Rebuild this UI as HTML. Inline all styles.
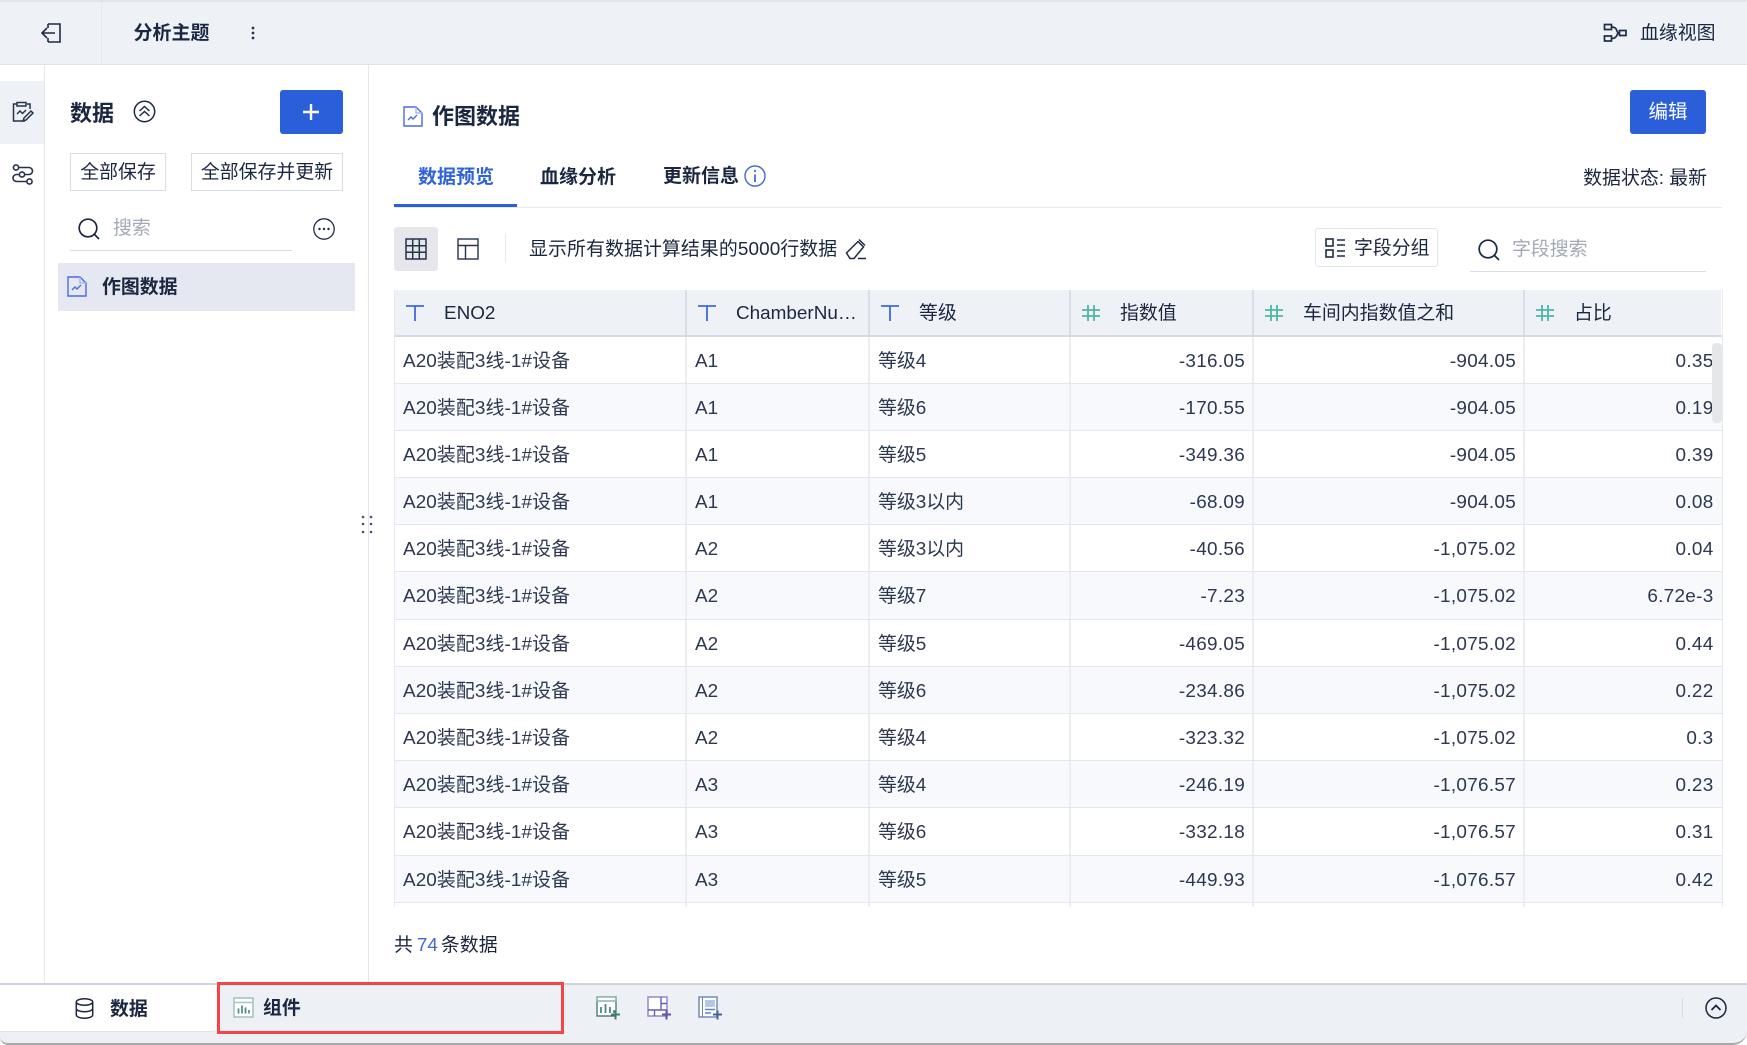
<!DOCTYPE html>
<html lang="zh"><head><meta charset="utf-8"><title>作图数据</title>
<style>
*{box-sizing:border-box}
html,body{margin:0;padding:0;background:#fff;width:1747px;height:1045px;overflow:hidden}
body{font-family:"Liberation Sans","Noto Sans CJK SC",sans-serif;color:#1b2740;font-size:18.9px;position:relative}
.a{position:absolute;white-space:nowrap;line-height:1}
.b{font-weight:700}
svg{position:absolute;overflow:visible}
.btn{position:absolute;border:1px solid #d8dce6;background:#fff;text-align:center;white-space:nowrap}
.tbl{position:absolute;left:394px;top:290px;width:1329px;height:617px;overflow:hidden;border-left:1px solid #e6e9f1;border-right:1px solid #e6e9f1}
.r{display:grid;grid-template-columns:292px 183px 201px 183px 271px 198px;height:47.2px;border-bottom:1px solid #e4e7ef;color:#2c3750}
.r.o{background:#f7f9fd}
.r>div{border-right:2px solid #eceef4;line-height:49px;padding:0 8px;white-space:nowrap;overflow:hidden}
.r>div:first-child{letter-spacing:.1px}
.r>div:last-child{border-right:0;padding-right:9px}
.r>.n{text-align:right;letter-spacing:.3px;padding-right:7px}
.r>div.n:last-child{padding-right:9.500px}
.h{height:46.500px;background:#eef1f6;border-bottom:2px solid #d6dae4;color:#1b2740;position:relative}
.r.h>div{border-right:2px solid #d9dde6;line-height:47px;padding-left:49px;letter-spacing:0}
.r.h>div:last-child{border-right:2px solid #fff}
</style></head><body>

<!-- header -->
<div style="position:absolute;left:0;top:0;width:1747px;height:65px;background:#eef1f6;border-top:2px solid #e2e5ea;border-bottom:1px solid #dfe3ec"></div>
<div style="position:absolute;left:101px;top:2px;width:1px;height:62px;background:#e2e6ee"></div>
<svg style="left:40px;top:22px" width="22" height="22" viewBox="0 0 22 22" fill="none" stroke="#1f2b45" stroke-width="1.6"><path d="M8 2h12v18H8M8 2v4M8 16v4M15 11H2M7 6l-5 5 5 5"/></svg>
<div class="a b" style="left:133.500px;top:24px;font-size:19px">分析主题</div>
<svg style="left:250px;top:26px" width="6" height="14" fill="#2a3550"><circle cx="3" cy="2" r="1.4"/><circle cx="3" cy="7" r="1.4"/><circle cx="3" cy="12" r="1.4"/></svg>
<svg style="left:1603px;top:22px" width="24" height="20" viewBox="0 0 24 20" fill="none" stroke="#1f2b45" stroke-width="1.700"><rect x="1.500" y="2.500" width="7" height="5"/><rect x="1.500" y="14" width="7" height="5"/><rect x="16.500" y="8.500" width="6.500" height="5"/><path d="M8.500 5c4 0 5 2 5.500 4 .3 1 1 2 2.500 2M8.500 16.500c4 0 5-2 5.500-3.500 .3-1 1-2 2.500-2"/></svg>
<div class="a" style="left:1640px;top:25px">血缘视图</div>

<!-- left rail -->
<div style="position:absolute;left:44px;top:65px;width:1px;height:918px;background:#e4e7ee"></div>
<div style="position:absolute;left:0;top:81px;width:44px;height:63px;background:#eef1f6"></div>
<svg style="left:12px;top:101px" width="22" height="22" viewBox="0 0 22 22" fill="none" stroke="#27334d" stroke-width="1.5"><path d="M5 3H1.500v17H13M15 3h3v5M5 1.500h9V5H5zM5 13l3-3 2.500 2.500L14 9M11 20l1-3 7-7 2 2-7 7z"/></svg>
<svg style="left:12px;top:164px" width="22" height="22" viewBox="0 0 22 22" fill="none" stroke="#27334d" stroke-width="1.6"><circle cx="4" cy="3.500" r="2.600"/><circle cx="10" cy="10.500" r="2.600"/><circle cx="17.500" cy="17.500" r="2.600"/><path d="M7 3.500h10a3.500 3.500 0 0 1 0 7h-4M7 10.500H4.500a3.500 3.500 0 0 0 0 7H15"/></svg>

<!-- panel -->
<div style="position:absolute;left:368px;top:65px;width:1px;height:918px;background:#e4e7ee"></div>
<div class="a b" style="left:70px;top:103px;font-size:22px">数据</div>
<svg style="left:133px;top:100px" width="23" height="23" viewBox="0 0 23 23" fill="none" stroke="#1f2b45" stroke-width="1.500"><circle cx="11.500" cy="11.500" r="10.200"/><path d="M6.500 11l5-4.500 5 4.500M6.500 16l5-4.500 5 4.500"/></svg>
<div style="position:absolute;left:280px;top:90px;width:63px;height:44px;background:#2b5fd9;border-radius:3px"></div>
<svg style="left:302px;top:103px" width="18" height="18" stroke="#fff" stroke-width="2.400"><path d="M1 9h16M9 1v16"/></svg>
<div class="btn" style="left:70px;top:153px;width:96px;height:38px;line-height:38px">全部保存</div>
<div class="btn" style="left:191px;top:153px;width:152px;height:38px;line-height:38px">全部保存并更新</div>
<svg style="left:78px;top:218px" width="22" height="22" viewBox="0 0 22 22" fill="none" stroke="#1b2740" stroke-width="1.700"><circle cx="10" cy="10" r="8.800"/><path d="M16.500 16.500l4.500 4.500"/></svg>
<div class="a" style="left:113px;top:220px;color:#a3a9b5">搜索</div>
<div style="position:absolute;left:70px;top:250px;width:222px;height:1px;background:#dadde5"></div>
<svg style="left:313px;top:218px" width="22" height="22" viewBox="0 0 22 22" fill="none" stroke="#1f2b45" stroke-width="1.300"><circle cx="11" cy="11" r="10.200"/><g fill="#1f2b45" stroke="none"><circle cx="6.500" cy="11" r="1.200"/><circle cx="11" cy="11" r="1.200"/><circle cx="15.500" cy="11" r="1.200"/></g></svg>
<div style="position:absolute;left:58px;top:263px;width:297px;height:48px;background:#e5e8f0"></div>
<svg style="left:67px;top:276px" width="20" height="21" viewBox="0 0 20 21" fill="none" stroke="#4a6ae0" stroke-width="1.400"><path d="M1 1h12l6 6v13H1z"/><path d="M13 1v6h6" stroke="#a9b8ef"/><path d="M5 14l3-3 2 2 4-4"/></svg>
<div class="a b" style="left:102px;top:279px">作图数据</div>
<svg style="left:360px;top:514px" width="14" height="21" fill="#4a5468"><circle cx="3" cy="3" r="1.300"/><circle cx="11" cy="3" r="1.300"/><circle cx="3" cy="10" r="1.300"/><circle cx="11" cy="10" r="1.300"/><circle cx="3" cy="18" r="1.300"/><circle cx="11" cy="18" r="1.300"/></svg>

<!-- main head -->
<svg style="left:403px;top:106px" width="20" height="21" viewBox="0 0 20 21" fill="none" stroke="#4a6ae0" stroke-width="1.400"><path d="M1 1h12l6 6v13H1z"/><path d="M13 1v6h6" stroke="#a9b8ef"/><path d="M5 14l3-3 2 2 4-4"/></svg>
<div class="a b" style="left:432px;top:106px;font-size:22px">作图数据</div>
<div style="position:absolute;left:1630px;top:90px;width:76px;height:44px;background:#2b5fd9;border-radius:3px;color:#fff;text-align:center;line-height:45px;font-size:19.500px">编辑</div>

<!-- tabs -->
<div class="a b" style="left:418px;top:167.500px;color:#2f62dc;font-size:19px">数据预览</div>
<div class="a b" style="left:540px;top:167.500px;font-size:19px">血缘分析</div>
<div class="a b" style="left:663px;top:166.500px;font-size:19px">更新信息</div>
<svg style="left:744px;top:165px" width="22" height="22" viewBox="0 0 22 22" fill="none" stroke="#3f68dc" stroke-width="1.400"><circle cx="11" cy="11" r="10"/><path d="M11 9.500V17" stroke-width="1.800"/><circle cx="11" cy="6" r="1.100" fill="#3f68dc" stroke="none"/></svg>
<div class="a" style="right:40px;top:169.500px">数据状态: 最新</div>
<div style="position:absolute;left:394px;top:207px;width:1328px;height:1px;background:#e6e9f0"></div>
<div style="position:absolute;left:394px;top:204px;width:123px;height:3px;background:#2b5fd9"></div>

<!-- toolbar -->
<div style="position:absolute;left:394px;top:227px;width:44px;height:44px;background:#e5e7eb;border-radius:3px"></div>
<svg style="left:405px;top:238px" width="22" height="22" viewBox="0 0 22 22" fill="none" stroke="#27334d" stroke-width="1.500"><rect x="1" y="1" width="20" height="20"/><path d="M7.700 1v20M14.300 1v20M1 7.700h20M1 14.300h20"/></svg>
<svg style="left:457px;top:238px" width="22" height="22" viewBox="0 0 22 22" fill="none" stroke="#27334d" stroke-width="1.400"><rect x="1" y="1" width="20" height="20"/><path d="M1 7.500h20M8.500 7.500V21"/></svg>
<div style="position:absolute;left:505px;top:233px;width:1px;height:30px;background:#e6e9f0"></div>
<div class="a" style="left:529px;top:240.500px;letter-spacing:.1px">显示所有数据计算结果的5000行数据</div>
<svg style="left:845px;top:238px" width="22" height="22" viewBox="0 0 22 22" fill="none" stroke="#1f2b45" stroke-width="1.500"><path d="M1.500 15L13 3.500 18.500 9 9 20.500H5z"/><path d="M14 1.500l6 6M13 20.500h8"/></svg>
<div style="position:absolute;left:1315px;top:228px;width:123px;height:39px;border:1px solid #e1e4eb;border-radius:3px"></div>
<svg style="left:1325px;top:238px" width="21" height="20" viewBox="0 0 21 20" fill="none" stroke="#1f2b45" stroke-width="1.600"><rect x="1" y="1" width="7" height="7"/><rect x="1" y="12" width="7" height="7"/><path d="M12 2h8M12 7h8M12 13h8M12 18h8"/></svg>
<div class="a" style="left:1354px;top:239.500px">字段分组</div>
<svg style="left:1478px;top:239px" width="22" height="22" viewBox="0 0 22 22" fill="none" stroke="#1b2740" stroke-width="1.700"><circle cx="10" cy="10" r="8.800"/><path d="M16.500 16.500l4.500 4.500"/></svg>
<div class="a" style="left:1512px;top:240.500px;color:#a3a9b5">字段搜索</div>
<div style="position:absolute;left:1470px;top:271px;width:236px;height:1px;background:#dadde5"></div>

<!-- table -->
<div class="tbl">
<div class="r h"><div>ENO2</div><div>ChamberNu…</div><div>等级</div><div>指数值</div><div>车间内指数值之和</div><div>占比</div></div>
<div class="r"><div>A20装配3线-1#设备</div><div>A1</div><div>等级4</div><div class="n">-316.05</div><div class="n">-904.05</div><div class="n">0.35</div></div>
<div class="r o"><div>A20装配3线-1#设备</div><div>A1</div><div>等级6</div><div class="n">-170.55</div><div class="n">-904.05</div><div class="n">0.19</div></div>
<div class="r"><div>A20装配3线-1#设备</div><div>A1</div><div>等级5</div><div class="n">-349.36</div><div class="n">-904.05</div><div class="n">0.39</div></div>
<div class="r o"><div>A20装配3线-1#设备</div><div>A1</div><div>等级3以内</div><div class="n">-68.09</div><div class="n">-904.05</div><div class="n">0.08</div></div>
<div class="r"><div>A20装配3线-1#设备</div><div>A2</div><div>等级3以内</div><div class="n">-40.56</div><div class="n">-1,075.02</div><div class="n">0.04</div></div>
<div class="r o"><div>A20装配3线-1#设备</div><div>A2</div><div>等级7</div><div class="n">-7.23</div><div class="n">-1,075.02</div><div class="n">6.72e-3</div></div>
<div class="r"><div>A20装配3线-1#设备</div><div>A2</div><div>等级5</div><div class="n">-469.05</div><div class="n">-1,075.02</div><div class="n">0.44</div></div>
<div class="r o"><div>A20装配3线-1#设备</div><div>A2</div><div>等级6</div><div class="n">-234.86</div><div class="n">-1,075.02</div><div class="n">0.22</div></div>
<div class="r"><div>A20装配3线-1#设备</div><div>A2</div><div>等级4</div><div class="n">-323.32</div><div class="n">-1,075.02</div><div class="n">0.3</div></div>
<div class="r o"><div>A20装配3线-1#设备</div><div>A3</div><div>等级4</div><div class="n">-246.19</div><div class="n">-1,076.57</div><div class="n">0.23</div></div>
<div class="r"><div>A20装配3线-1#设备</div><div>A3</div><div>等级6</div><div class="n">-332.18</div><div class="n">-1,076.57</div><div class="n">0.31</div></div>
<div class="r o"><div>A20装配3线-1#设备</div><div>A3</div><div>等级5</div><div class="n">-449.93</div><div class="n">-1,076.57</div><div class="n">0.42</div></div>
<div class="r"><div>&nbsp;</div><div></div><div></div><div></div><div></div><div></div></div>
</div>
<!-- header type icons -->
<svg style="left:406px;top:305px" width="18" height="16" stroke="#3f68dc" stroke-width="1.800" fill="none"><path d="M0 1h18M9 1v15"/></svg>
<svg style="left:698px;top:305px" width="18" height="16" stroke="#3f68dc" stroke-width="1.800" fill="none"><path d="M0 1h18M9 1v15"/></svg>
<svg style="left:881px;top:305px" width="18" height="16" stroke="#3f68dc" stroke-width="1.800" fill="none"><path d="M0 1h18M9 1v15"/></svg>
<svg style="left:1082px;top:305px" width="18" height="16" stroke="#4db6a5" stroke-width="1.800" fill="none"><path d="M0 5h18M0 11h18M6 0v16M12 0v16"/></svg>
<svg style="left:1265px;top:305px" width="18" height="16" stroke="#4db6a5" stroke-width="1.800" fill="none"><path d="M0 5h18M0 11h18M6 0v16M12 0v16"/></svg>
<svg style="left:1536px;top:305px" width="18" height="16" stroke="#4db6a5" stroke-width="1.800" fill="none"><path d="M0 5h18M0 11h18M6 0v16M12 0v16"/></svg>
<div style="position:absolute;left:1712px;top:343px;width:10px;height:80px;background:#e5e7eb;border-radius:4px"></div>

<div class="a" style="left:394px;top:937px">共<span style="color:#3f68dc;margin:0 3px 0 4px">74</span>条数据</div>

<!-- bottom bar -->
<div style="position:absolute;left:0;top:983px;width:1747px;height:62px;background:#edf0f5;border-top:2px solid #cfd3dd;border-bottom:2px solid #a6a8ab;border-radius:0 0 14px 8px"></div>
<div style="position:absolute;left:0;top:985px;width:217px;height:47px;background:#fff;border-bottom-right-radius:5px;border-bottom:1px solid #dfe2e9"></div>
<svg style="left:75px;top:998px" width="19" height="21" viewBox="0 0 19 21" fill="none" stroke="#1b2740" stroke-width="1.500"><ellipse cx="9.500" cy="4" rx="8.200" ry="3.200"/><path d="M1.300 4v13c0 1.800 3.700 3.200 8.200 3.200s8.200-1.400 8.200-3.200V4M1.300 10.500c0 1.800 3.700 3.200 8.200 3.200s8.200-1.400 8.200-3.200"/></svg>
<div class="a b" style="left:110px;top:1001px">数据</div>
<div style="position:absolute;left:217px;top:982px;width:347px;height:52px;border:3px solid #f44444"></div>
<svg style="left:233px;top:997px" width="21" height="21" viewBox="0 0 21 21" fill="none"><rect x="1" y="1" width="19" height="19" fill="#fff" stroke="#a9c4bf" stroke-width="1.600"/><path d="M1 5.500h19" stroke="#a9c4bf" stroke-width="1.500"/><path d="M5.500 16.500v-5M9 16.500V8.500M12.500 16.500v-6M16 16.500v-3.500" stroke="#4b8b82" stroke-width="1.700"/></svg>
<div class="a b" style="left:263px;top:1000px">组件</div>
<svg style="left:596px;top:996px" width="24" height="24" viewBox="0 0 24 24" fill="none"><path d="M1 1h19v19H1z" fill="#fff" stroke="#2f6b66" stroke-width="1.200"/><path d="M1 1h19v4H1z" fill="#fff" stroke="#8fb2ad" stroke-width="1.600"/><path d="M5 17v-6M9.500 17V8M14 17v-6M18 17v-3" stroke="#4b8b82" stroke-width="1.800"/><path d="M15 18.500h9M19.500 14.500v9" stroke="#3e7e76" stroke-width="2"/></svg>
<svg style="left:647px;top:996px" width="24" height="24" viewBox="0 0 24 24" fill="none"><rect x="1" y="1" width="19" height="19" fill="#fff" stroke="#9a8fd0" stroke-width="1.600"/><path d="M14 1v13M1 14h19M14 7.500h6M7.500 14v6" stroke="#6a5cb8" stroke-width="1.400"/><path d="M15 18.500h9M19.500 14.500v9" stroke="#5e50ad" stroke-width="2"/></svg>
<svg style="left:698px;top:996px" width="24" height="24" viewBox="0 0 24 24" fill="none"><rect x="1" y="1" width="18" height="20" fill="#fff" stroke="#6d83b5" stroke-width="1.400"/><path d="M4.500 1v20" stroke="#6d83b5" stroke-width="1"/><rect x="7" y="4" width="10" height="7" fill="#b3c8ea"/><path d="M7 13.500h10M7 17h6" stroke="#5b84cf" stroke-width="1.500"/><path d="M15 18.500h9M19.500 14.500v9" stroke="#44639e" stroke-width="2"/></svg>
<div style="position:absolute;left:1682px;top:998px;width:1px;height:20px;background:#d8dce4"></div>
<svg style="left:1705px;top:997px" width="22" height="22" viewBox="0 0 22 22" fill="none" stroke="#1b2740" stroke-width="1.500"><circle cx="11" cy="11" r="10"/><path d="M6.500 13l4.500-4.500 4.500 4.500" stroke-width="1.800"/></svg>
</body></html>
